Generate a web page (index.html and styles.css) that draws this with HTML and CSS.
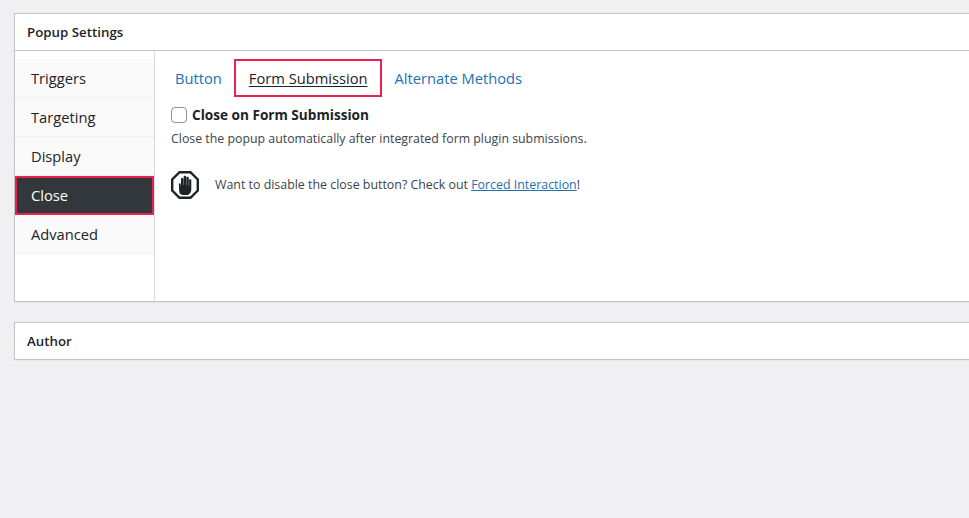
FILE: index.html
```html
<!DOCTYPE html>
<html lang="en">
<head>
<meta charset="utf-8">
<title>Popup Settings</title>
<link rel="stylesheet" href="styles.css">
</head>
<body>
<main class="page">
  <section class="panel">
    <h2 class="panel-title">Popup Settings</h2>
    <div class="panel-body">
      <nav class="side">
        <a class="side-item">Triggers</a>
        <a class="side-item">Targeting</a>
        <a class="side-item">Display</a>
        <a class="side-item active">Close</a>
        <a class="side-item">Advanced</a>
      </nav>
      <div class="content">
        <div class="tabs">
          <a class="tab">Button</a>
          <a class="tab current">Form Submission</a>
          <a class="tab">Alternate Methods</a>
        </div>
        <label class="check-row"><span class="check"></span><span class="check-label">Close on Form Submission</span></label>
        <p class="desc">Close the popup automatically after integrated form plugin submissions.</p>
        <div class="notice">
          <svg class="stop" width="28" height="28" viewBox="0 0 28 28" aria-hidden="true">
            <polygon points="8.500,1.200 19.500,1.200 26.800,8.500 26.800,19.500 19.500,26.800 8.500,26.800 1.200,19.500 1.200,8.500" fill="#fff" stroke="#1d2327" stroke-width="2.400"/>
            <path d="M7.800 13c0-1 1.900-1 1.900 0v2h.3V7.800c0-1.100 2.400-1.100 2.400 0V14h.3V5.500c0-1.100 2.400-1.100 2.400 0V14h.3V6.500c0-1.100 2.400-1.100 2.400 0V15h.3V9c0-1.100 2.200-1.100 2.200 0v9.500c0 3.500-2.200 5.500-5.200 5.500h-2.800c-2.200 0-3.400-1-4-2.800z" fill="#1d2327"/>
          </svg>
          <p class="notice-text">Want to disable the close button? Check out <a class="link">Forced Interaction</a>!</p>
        </div>
      </div>
    </div>
  </section>
  <section class="panel author">
    <h2 class="panel-title">Author</h2>
  </section>
</main>
</body>
</html>
```
FILE: styles.css
```css
html, body { margin: 0; padding: 0; height: 100%; background: #f0f0f2; }
body { font-family: "Open Sans", "Noto Sans", sans-serif; color: #1d2327; }
.page { padding: 13px 0 0 14px; }
.panel { background: #fff; border: 1px solid #c3c4c7; border-right: 0; box-shadow: 0 1px 1px rgba(0,0,0,.04); }
.panel-title { margin: 0; height: 36px; padding: 0 12px; line-height: 37px; font-size: 13.3px; font-weight: 600; border-bottom: 1px solid #c3c4c7; }
.author { margin-top: 20px; }
.author .panel-title { border-bottom: 0; }
.panel-body { display: flex; height: 250px; }
.side { width: 140px; flex: none; box-sizing: border-box; border-right: 1px solid #dcdcde; padding-top: 8px; }
.side-item { display: block; box-sizing: border-box; height: 39px; line-height: 38px; padding-left: 16px; font-size: 14.7px; background: #fafafa; border-bottom: 1px solid #f0f0f1; }
.side-item.active { background: #32373c; color: #fff; border: 2px solid #e6234f; padding-left: 14px; line-height: 35px; }
.content { flex: 1; padding: 8px 0 0 16px; }
.tabs { display: flex; height: 39px; }
.tab { box-sizing: border-box; height: 39px; line-height: 39px; padding: 0 4px; font-size: 14.7px; color: #2271b1; margin-right: 8px; }
.tab.current { color: #1d2327; border: 2px solid #e6234f; height: 38px; line-height: 35px; padding: 0 12px 0 13px; margin-right: 9px; text-decoration: underline; text-underline-offset: 2px; }
.check-row { display: flex; align-items: center; margin-top: 7px; height: 20px; }
.check { width: 14px; height: 14px; border: 1px solid #8c8f94; border-radius: 4px; background: #fff; }
.check-label { margin: -2px 0 0 5px; font-size: 13.6px; font-weight: 700; }
.desc { margin: 5px 0 0; font-size: 12.35px; line-height: 18px; color: #3c434a; }
.notice { display: flex; align-items: center; margin-top: 23px; }
.stop { flex: none; }
.notice-text { margin: -1px 0 0 16px; font-size: 12.4px; line-height: 18px; color: #3c434a; }
.link { color: #2271b1; text-decoration: underline; }
```
